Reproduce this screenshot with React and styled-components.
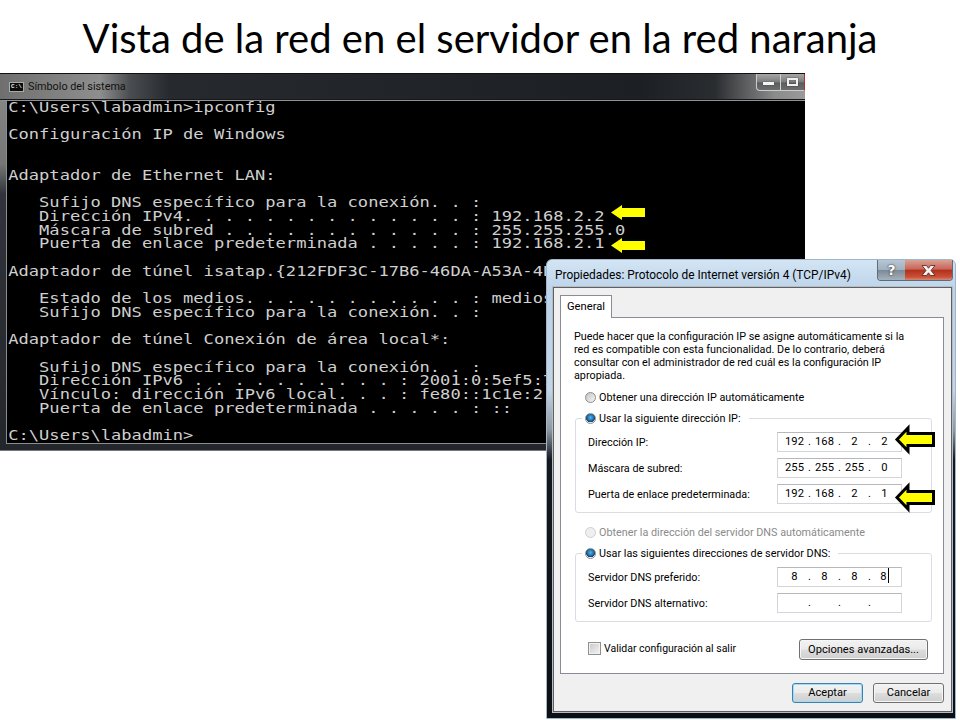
import React from "react";
import styled, { createGlobalStyle } from "styled-components";

const GlobalStyle = createGlobalStyle`
    html, body {
        margin: 0;
        padding: 0;
        background: #fff;
    }
`;

const Slide = styled.div`
    position: relative;
    width: 960px;
    height: 720px;
    overflow: hidden;
    background: #fff;
`;
const Title = styled.h1`
    margin: 0;
    padding-top: 14px;
    text-align: center;
    font-family: "Lato", "Open Sans", sans-serif;
    font-size: 40px;
    line-height: 48px;
    font-weight: 400;
    color: #000;
`;

/* console window */
const ConsoleWindow = styled.div`
    position: absolute;
    left: 0;
    top: 73px;
    width: 805px;
    height: 378px;
    display: flex;
    flex-direction: column;
    padding: 0 0 6px 6px;
    box-sizing: border-box;
    border-top: 1px solid #111;
    border-bottom: 1px solid #777;
    background: linear-gradient(to bottom, #8a8a8a 0, #767676 90px, #30343a 120px, #23272c 100%);
`;
const ConsoleTitleBar = styled.div`
    flex: none;
    height: 26px;
    margin-left: -6px;
    padding-left: 9px;
    position: relative;
    display: flex;
    align-items: center;
    gap: 4px;
    border-bottom: 1px solid #8f9295;
    box-shadow: inset 0 -1px 0 #16181a;
    background: linear-gradient(to right, #6f6f6f 0, #8e8e8e 100px, #4a4d50 130px, #26292d 170px, #1c2024 640px, #2a2d30 715px, #8b8b8b 775px, #9a9a9a 805px);
`;
const ConsoleIcon = styled.span`
    width: 13px;
    height: 8px;
    background: #0b0b0b;
    border: 1px solid #aaa;
    color: #eee;
    font: 700 6px/8px "Liberation Mono", monospace;
    text-align: center;
    overflow: hidden;
`;
const ConsoleCaption = styled.span`
    font: 400 10.8px/14px "Roboto", sans-serif;
    color: #111;
`;
const ConsoleButtons = styled.div`
    position: absolute;
    right: 0;
    top: 0;
    width: 47px;
    height: 16px;
    display: flex;
    border: 1px solid #ccc;
    border-top: none;
    border-right: 1px solid #a33;
    border-radius: 0 0 0 4px;
    background: linear-gradient(to bottom, #a6a6a6, #7c7c7c 50%, #5a5d60 55%, #6c6c6c);
`;
const ConsoleButton = styled.span`
    flex: 1;
    display: flex;
    align-items: center;
    justify-content: center;
    & + & {
        border-left: 1px solid #d0d0d0;
    }
`;
const MinGlyph = styled.span`
    width: 11px;
    height: 3px;
    margin-top: 3px;
    background: #f4f4f4;
    box-shadow: 0 0 1px #222;
`;
const MaxGlyph = styled.span`
    width: 7px;
    height: 4px;
    border: 2px solid #f0f0f0;
    box-shadow: 0 0 1px #222, inset 0 0 1px #222;
`;
const ConsoleScreen = styled.div`
    flex: 1;
    background: #000;
    overflow: hidden;
    border-left: 1px solid #8a8d90;
    border-bottom: 1px solid #8a8d90;
`;
const ConsoleText = styled.pre`
    margin: -0.5px 0 0;
    padding-left: 1px;
    width: 700px;
    font-family: "DejaVu Sans Mono", monospace;
    font-size: 14px;
    line-height: 13.68px;
    color: #cfcfcf;
    white-space: pre;
    transform: scaleX(1.22);
    transform-origin: left top;
`;

/* properties dialog */
const Dialog = styled.div`
    position: absolute;
    left: 546px;
    top: 259px;
    width: 410px;
    height: 460px;
    box-sizing: border-box;
    padding: 0 3px 6px 6px;
    display: flex;
    flex-direction: column;
    border: 1px solid #9fb6cc;
    border-radius: 6px 6px 0 0;
    background: linear-gradient(to bottom, #d3e5f4 0, #bcd3ea 30px, #c3d5e6 130px, #8d98a3 170px, #14181d 200px, #0c0f13 100%);
`;
const DialogTitleBar = styled.div`
    flex: none;
    height: 27px;
    position: relative;
    display: flex;
    align-items: center;
    padding: 2px 0 0 2px;
    box-sizing: border-box;
    font: 400 11.9px/14px "Roboto", sans-serif;
    color: #000;
`;
const CaptionButtons = styled.div`
    position: absolute;
    top: 0;
    right: -1px;
    height: 20px;
    display: flex;
    border: 1px solid #5f6b78;
    border-top: none;
    border-radius: 0 0 4px 4px;
    overflow: hidden;
`;
const HelpButton = styled.span`
    width: 27px;
    display: flex;
    align-items: center;
    justify-content: center;
    background: linear-gradient(to bottom, #b7c6d4, #9fb0bf 50%, #7d8b97 52%, #a5b1bc);
    font: 700 14px/1 "DejaVu Sans", sans-serif;
    color: #fff;
    text-shadow: 0 0 2px #333, 0 0 1px #333;
`;
const CloseButton = styled.span`
    width: 47px;
    display: flex;
    align-items: center;
    justify-content: center;
    background: linear-gradient(to bottom, #d9a294, #c8665a 45%, #b5301b 52%, #c9503a 85%, #d58a70);
`;
const Client = styled.div`
    flex: 1;
    box-sizing: border-box;
    padding: 8px 7px 0 6px;
    background: #f0f0f0;
    border: 1px solid #5a6066;
    box-shadow: 0 0 0 1px #b8bcc0;
    display: flex;
    flex-direction: column;
`;
const TabStrip = styled.div`
    flex: none;
    height: 21px;
    display: flex;
    align-items: flex-end;
`;
const Tab = styled.div`
    width: 50px;
    height: 22px;
    margin-bottom: -1px;
    border: 1px solid #898c95;
    border-bottom: none;
    background: #fff;
    position: relative;
    z-index: 1;
    font: 400 11.2px/21px "Roboto", sans-serif;
    color: #000;
    text-align: center;
`;
const Pane = styled.div`
    flex: none;
    height: 357px;
    box-sizing: border-box;
    border: 1px solid #898c95;
    background: #fff;
    padding-top: 12px;
    font: 400 10.8px/13px "Roboto", sans-serif;
    color: #000;
`;
const Intro = styled.p`
    margin: 0 0 0 13px;
    width: 345px;
    line-height: 13px;
`;
const RadioRow = styled.div`
    display: flex;
    align-items: center;
    gap: 3px;
    height: 14px;
    margin: ${(p) => p.$mt || 0}px 0 0 24px;
    color: ${(p) => (p.$disabled ? "#8a8a8a" : "#000")};
`;
const RadioDot = styled.span`
    flex: none;
    width: 11px;
    height: 11px;
    border-radius: 50%;
    box-sizing: border-box;
    border: 1px solid ${(p) => (p.$disabled ? "#cfcfcf" : "#8c8c8c")};
    background: ${(p) =>
        p.$checked
            ? "radial-gradient(circle at 50% 40%, #58b6e8 0, #1d6ea8 45%, #123c68 62%, #f2f2f2 68%)"
            : p.$disabled
            ? "#efefef"
            : "linear-gradient(135deg, #c4c4c4, #f6f6f6)"};
`;
const Group = styled.fieldset`
    margin: ${(p) => p.$mt || 0}px 11px 0 14px;
    padding: 7px 29px 8px 12px;
    border: 1px solid #d9dde2;
    border-radius: 3px;
    min-width: 0;
`;
const GroupLegend = styled.legend`
    display: flex;
    align-items: center;
    gap: 3px;
    height: 14px;
    margin-left: -6px;
    padding: 0 8px 0 3px;
`;
const FieldRow = styled.div`
    display: flex;
    align-items: center;
    justify-content: space-between;
    height: 20px;
    & + & {
        margin-top: 6px;
    }
`;
const IpBox = styled.div`
    width: 125px;
    height: 20px;
    box-sizing: border-box;
    border: 1px solid #d2d6da;
    border-top-color: #b5b9bd;
    padding-left: 5px;
    display: grid;
    grid-template-columns: 23px 7px 23px 7px 23px 7px 23px;
    background: #fff;
    font-size: 11.2px;
    line-height: 18px;
    text-align: center;
`;
const Caret = styled.span`
    display: inline-block;
    width: 1px;
    height: 15px;
    margin-left: 1px;
    background: #000;
    vertical-align: -3px;
`;
const BottomRow = styled.div`
    display: flex;
    align-items: center;
    justify-content: space-between;
    margin: 17px 15px 0 27px;
    height: 21px;
`;
const CheckLabel = styled.label`
    display: flex;
    align-items: center;
    gap: 3px;
    margin-top: -3px;
    font-size: 10.5px;
`;
const CheckBox = styled.span`
    width: 13px;
    height: 13px;
    box-sizing: border-box;
    border: 1px solid #8e8f8f;
    background: linear-gradient(135deg, #c8c8c8, #f4f4f4);
    box-shadow: inset 0 0 0 1px #f2f2f2;
`;
const Button = styled.button`
    width: ${(p) => p.$width}px;
    height: ${(p) => p.$height || 20}px;
    padding: 0;
    box-sizing: border-box;
    border: 1px solid ${(p) => (p.$primary ? "#3c7fb1" : "#707070")};
    border-radius: 3px;
    background: linear-gradient(to bottom, #f2f2f2, #ebebeb 48%, #dddddd 52%, #cfcfcf);
    box-shadow: inset 0 0 0 1px ${(p) => (p.$primary ? "#9fdcf5" : "#f6f6f6")};
    font: 400 11.1px/16px "Roboto", sans-serif;
    color: #000;
`;
const Footer = styled.div`
    display: flex;
    justify-content: flex-end;
    gap: 10px;
    margin-top: 9px;
`;

const ArrowSvg = styled.svg`
    position: absolute;
    left: ${(p) => p.$x}px;
    top: ${(p) => p.$y}px;
    overflow: visible;
`;

const consoleLines = [
    "C:\\Users\\labadmin>ipconfig",
    "",
    "Configuración IP de Windows",
    "",
    "",
    "Adaptador de Ethernet LAN:",
    "",
    "   Sufijo DNS específico para la conexión. . :",
    "   Dirección IPv4. . . . . . . . . . . . . . : 192.168.2.2",
    "   Máscara de subred . . . . . . . . . . . . : 255.255.255.0",
    "   Puerta de enlace predeterminada . . . . . : 192.168.2.1",
    "",
    "Adaptador de túnel isatap.{212FDF3C-17B6-46DA-A53A-4B6F}:",
    "",
    "   Estado de los medios. . . . . . . . . . . : medios desconectados",
    "   Sufijo DNS específico para la conexión. . :",
    "",
    "Adaptador de túnel Conexión de área local*:",
    "",
    "   Sufijo DNS específico para la conexión. . :",
    "   Dirección IPv6 . . . . . . . . . . : 2001:0:5ef5:7",
    "   Vínculo: dirección IPv6 local. . . : fe80::1c1e:2",
    "   Puerta de enlace predeterminada . . . . . : ::",
    "",
    "C:\\Users\\labadmin>",
].join("\n");

const IpField = ({ parts = ["", "", "", ""], caret }) => (
    <IpBox>
        {parts.map((part, i) => (
            <React.Fragment key={i}>
                {i > 0 && <span>.</span>}
                <span>
                    {part}
                    {caret && i === 3 && <Caret />}
                </span>
            </React.Fragment>
        ))}
    </IpBox>
);

// plain yellow arrow used over the console
const SmallArrow = ({ x, y }) => (
    <ArrowSvg $x={x} $y={y} width="34" height="15" viewBox="0 0 34 15">
        <path d="M0 7.5 L11 0 V3 H34 V12 H11 V15 Z" fill="#ffff00" />
    </ArrowSvg>
);

// yellow arrow with the heavy black outline, used over the dialog
const OutlinedArrow = ({ x, y }) => (
    <ArrowSvg $x={x} $y={y} width="40" height="27" viewBox="0 0 40 27">
        <path
            d="M2 13.5 L13 2 V7.5 H38.5 V19.5 H13 V25 Z"
            fill="#ffff00"
            stroke="#000"
            strokeWidth="3"
        />
    </ArrowSvg>
);

export default function App() {
    return (
        <Slide>
            <GlobalStyle />
            <Title>Vista de la red en el servidor en la red naranja</Title>

            <ConsoleWindow>
                <ConsoleTitleBar>
                    <ConsoleIcon>C:\</ConsoleIcon>
                    <ConsoleCaption>Símbolo del sistema</ConsoleCaption>
                    <ConsoleButtons>
                        <ConsoleButton><MinGlyph /></ConsoleButton>
                        <ConsoleButton><MaxGlyph /></ConsoleButton>
                    </ConsoleButtons>
                </ConsoleTitleBar>
                <ConsoleScreen>
                    <ConsoleText>{consoleLines}</ConsoleText>
                </ConsoleScreen>
            </ConsoleWindow>
            <SmallArrow x={611} y={205} />
            <SmallArrow x={611} y={238} />

            <Dialog>
                <DialogTitleBar>
                    Propiedades: Protocolo de Internet versión 4 (TCP/IPv4)
                    <CaptionButtons>
                        <HelpButton>?</HelpButton>
                        <CloseButton>
                            <svg width="17" height="13" viewBox="0 0 17 13">
                                <path
                                    d="M2 1.5 H6.5 L8.5 4.2 L10.5 1.5 H15 L11 6.5 L15 11.5 H10.5 L8.5 8.8 L6.5 11.5 H2 L6 6.5 Z"
                                    fill="#f4f4f4"
                                    stroke="#5a2018"
                                    strokeWidth="0.8"
                                />
                            </svg>
                        </CloseButton>
                    </CaptionButtons>
                </DialogTitleBar>
                <Client>
                    <TabStrip>
                        <Tab>General</Tab>
                    </TabStrip>
                    <Pane>
                        <Intro>
                            Puede hacer que la configuración IP se asigne automáticamente si la
                            red es compatible con esta funcionalidad. De lo contrario, deberá
                            consultar con el administrador de red cuál es la configuración IP
                            apropiada.
                        </Intro>
                        <RadioRow $mt={8}>
                            <RadioDot />
                            Obtener una dirección IP automáticamente
                        </RadioRow>
                        <Group $mt={7}>
                            <GroupLegend>
                                <RadioDot $checked />
                                Usar la siguiente dirección IP:
                            </GroupLegend>
                            <FieldRow>
                                Dirección IP:
                                <IpField parts={["192", "168", "2", "2"]} />
                            </FieldRow>
                            <FieldRow>
                                Máscara de subred:
                                <IpField parts={["255", "255", "255", "0"]} />
                            </FieldRow>
                            <FieldRow>
                                Puerta de enlace predeterminada:
                                <IpField parts={["192", "168", "2", "1"]} />
                            </FieldRow>
                        </Group>
                        <RadioRow $mt={12} $disabled>
                            <RadioDot $disabled />
                            Obtener la dirección del servidor DNS automáticamente
                        </RadioRow>
                        <Group $mt={7}>
                            <GroupLegend>
                                <RadioDot $checked />
                                Usar las siguientes direcciones de servidor DNS:
                            </GroupLegend>
                            <FieldRow>
                                Servidor DNS preferido:
                                <IpField parts={["8", "8", "8", "8"]} caret />
                            </FieldRow>
                            <FieldRow>
                                Servidor DNS alternativo:
                                <IpField />
                            </FieldRow>
                        </Group>
                        <BottomRow>
                            <CheckLabel>
                                <CheckBox />
                                Validar configuración al salir
                            </CheckLabel>
                            <Button $width={129} $height={21}>Opciones avanzadas...</Button>
                        </BottomRow>
                    </Pane>
                    <Footer>
                        <Button $width={71} $primary>Aceptar</Button>
                        <Button $width={71}>Cancelar</Button>
                    </Footer>
                </Client>
            </Dialog>
            <OutlinedArrow x={895} y={426} />
            <OutlinedArrow x={895} y={484} />
        </Slide>
    );
}
